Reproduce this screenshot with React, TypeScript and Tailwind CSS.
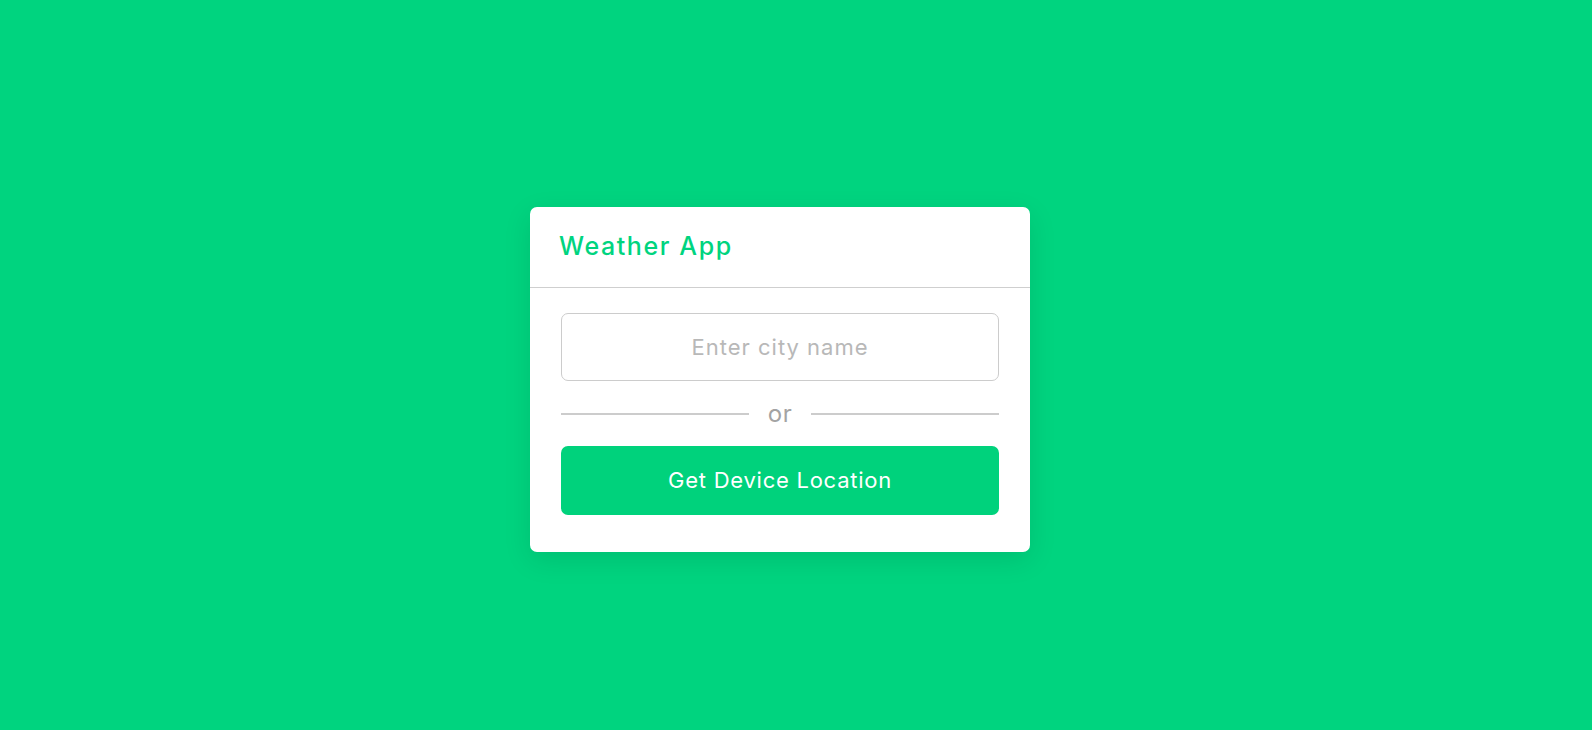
import { useState } from 'react'

export default function App() {
  const [city, setCity] = useState('')

  return (
    <div className="flex min-h-screen w-full items-center justify-center bg-[#00d47f] pr-[32px] pt-[29px] font-['Inter',sans-serif]">
      <div className="w-[500px] rounded-[7px] bg-white shadow-[0_8px_28px_rgba(0,0,0,0.1)]">
        {/* header */}
        <div className="flex h-[81px] items-center border-b border-[#cfcfcf] px-[29px]">
          <h1 className="text-[25px] font-medium tracking-[1.6px] text-[#00d47f]">
            Weather App
          </h1>
        </div>
        <div className="flex flex-col px-[31px] pb-[37px] pt-[25px]">
          <input
            type="text"
            value={city}
            onChange={(e) => setCity(e.target.value)}
            placeholder="Enter city name"
            className="h-[68px] w-full rounded-[7px] border border-[#cccccc] text-center text-[22px] tracking-[1px] text-[#444] outline-none placeholder:text-[#b8b8b8]"
          />
          <div className="flex h-[65px] items-center">
            <div className="h-[2px] flex-1 bg-[#cccccc]" />
            <span className="px-[19px] text-[24px] leading-none tracking-[0.5px] text-[#a3a3a3]">or</span>
            <div className="h-[2px] flex-1 bg-[#cccccc]" />
          </div>
          <button className="h-[69px] w-full rounded-[7px] bg-[#00d27c] text-[22px] tracking-[0.75px] text-white">
            Get Device Location
          </button>
        </div>
      </div>
    </div>
  )
}
